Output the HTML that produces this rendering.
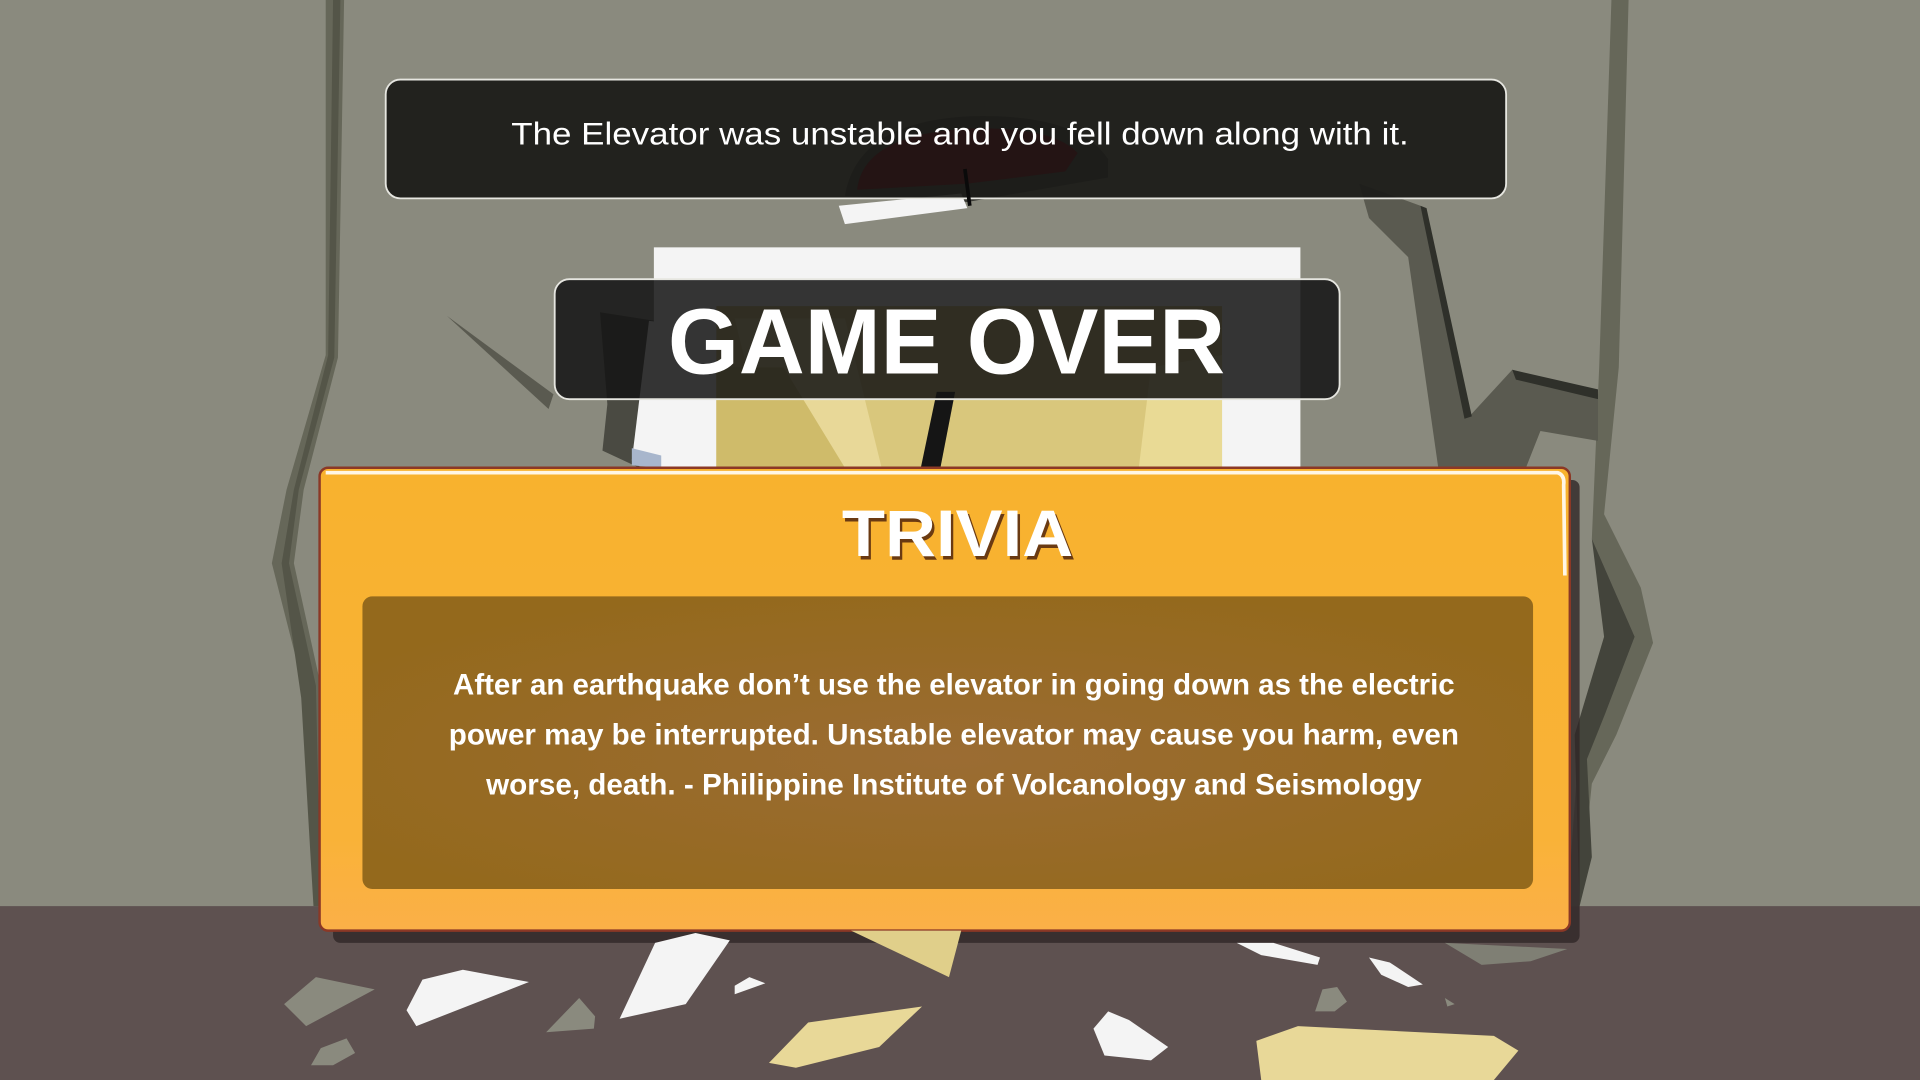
<!DOCTYPE html>
<html><head><meta charset="utf-8"><style>
html,body{margin:0;padding:0;width:1920px;height:1080px;overflow:hidden;background:#8a8a7e}
svg{display:block}
text{font-family:"Liberation Sans",Arial,sans-serif}
</style></head><body>
<svg width="1920" height="1080" viewBox="0 0 1568 882" preserveAspectRatio="none" xmlns="http://www.w3.org/2000/svg">
<defs>
<radialGradient id="ig" cx="50%" cy="55%" r="60%">
<stop offset="0" stop-color="#9b6c33"/><stop offset="1" stop-color="#94691c"/>
</radialGradient>
<linearGradient id="og" x1="0" y1="0" x2="0" y2="1">
<stop offset="0" stop-color="#f8b22e"/><stop offset="0.8" stop-color="#f9b238"/><stop offset="1" stop-color="#fbb048"/>
</linearGradient>
</defs>
<rect width="1568" height="882" fill="#8a8a7e"/>
<rect y="740" width="1568" height="142" fill="#5e5150"/>
<polygon points="266,0 281,0 276,292 248,400 240,460 262,560 270,740 258,740 250,570 222,460 234,400 266,290" fill="#666759"/>
<polygon points="272,0 278,0 273,292 244,400 236,460 258,560 262,740 256,740 246,570 230,460 240,400 268,290" fill="#545548"/>
<polygon points="1316,0 1330,0 1322,300 1310,420 1340,480 1350,525 1320,600 1300,640 1290,740 1280,740 1288,630 1312,580 1335,520 1300,440 1306,300" fill="#666759"/>
<polygon points="1300,440 1335,520 1312,580 1296,620 1300,700 1290,740 1286,600 1310,520" fill="#43443b"/>
<polygon points="1110,150 1160,168 1200,340 1235,302 1305,322 1305,360 1258,352 1245,385 1175,385 1150,210 1118,178" fill="#5a5a50"/>
<polygon points="1160,168 1165,170 1202,340 1196,342" fill="#2f302a"/>
<polygon points="1235,302 1305,318 1305,326 1238,310" fill="#2f302a"/>
<polygon points="365,258 452,322 448,334" fill="#5a5a50"/>
<polygon points="490,255 535,262 522,382 492,368 496,330" fill="#4a4a42"/>
<path d="M690,160 Q700,100 790,95 Q880,92 905,130 L905,145 L790,165 Z" fill="#3a3a34"/>
<polygon points="685,168 785,158 790,170 690,183" fill="#f4f4f4"/>
<rect x="534" y="202" width="528" height="180" fill="#f4f4f4"/>
<polygon points="530,262 585,268 570,382 516,376" fill="#f4f4f4"/>
<polygon points="516,366 540,372 540,382 516,380" fill="#a8b6cc"/>
<rect x="585" y="250" width="413" height="132" fill="#d9c77c"/>
<polygon points="600,260 690,260 720,382 630,382" fill="#e8d898"/>
<polygon points="585,300 640,300 690,382 585,382" fill="#cfbb6a"/>
<polygon points="765,320 780,320 768,382 752,382" fill="#151515"/>
<polygon points="940,300 998,290 998,382 930,382" fill="#e9da95"/>
<rect x="315" y="65" width="915" height="97" rx="12" fill="#1c1c18" fill-opacity="0.94" stroke="#e6e6e0" stroke-width="1.5"/>
<path d="M700,155 Q705,110 790,105 Q860,103 880,125 L870,140 L790,150 Z" fill="#2a0f10" fill-opacity="0.6"/>
<line x1="788" y1="138" x2="792" y2="168" stroke="#0a0a0a" stroke-width="3"/>
<text x="784" y="118" font-size="26" fill="#fff" text-anchor="middle" textLength="733" lengthAdjust="spacingAndGlyphs">The Elevator was unstable and you fell down along with it.</text>
<rect x="453" y="228" width="641" height="98" rx="12" fill="#141414" fill-opacity="0.86" stroke="#e6e6e0" stroke-width="1.5"/>
<text x="773" y="305" font-size="76" font-weight="bold" fill="#fff" text-anchor="middle" textLength="455" lengthAdjust="spacingAndGlyphs">GAME OVER</text>
<rect x="272" y="392" width="1018" height="378" rx="6" fill="#2f2727" fill-opacity="0.8"/>
<rect x="261" y="382" width="1021" height="378" rx="7" fill="url(#og)" stroke="#8b3826" stroke-width="2"/>
<path d="M266,386 L1272,386 Q1278,388 1277,396 L1278,470" fill="none" stroke="#fff6e6" stroke-width="3"/>
<text x="784" y="457" font-size="54" font-weight="bold" fill="#6a3a12" text-anchor="middle" textLength="189" lengthAdjust="spacingAndGlyphs">TRIVIA</text>
<text x="782" y="454" font-size="54" font-weight="bold" fill="#fff" text-anchor="middle" textLength="189" lengthAdjust="spacingAndGlyphs">TRIVIA</text>
<rect x="296" y="487" width="956" height="239" rx="8" fill="url(#ig)"/>
<g font-size="24" font-weight="bold" fill="#fff" text-anchor="middle">
<text x="779" y="567" textLength="818" lengthAdjust="spacingAndGlyphs">After an earthquake don’t use the elevator in going down as the electric</text>
<text x="779" y="608" textLength="825" lengthAdjust="spacingAndGlyphs">power may be interrupted. Unstable elevator may cause you harm, even</text>
<text x="779" y="649" textLength="764" lengthAdjust="spacingAndGlyphs">worse, death.  - Philippine Institute of Volcanology and Seismology</text>
</g>
<polygon points="695,760 785,760 775,798" fill="#e0cf8a"/>
<polygon points="1180,770 1280,775 1250,785 1210,788" fill="#7f7f74"/>
<polygon points="258,798 306,808 250,838 232,820" fill="#8a8a7e"/>
<polygon points="345,800 378,792 432,802 340,838 332,825" fill="#f4f4f4"/>
<polygon points="535,770 568,762 596,768 560,820 506,832" fill="#f4f4f4"/>
<polygon points="600,805 612,798 625,803 600,812" fill="#f4f4f4"/>
<polygon points="473,815 486,830 485,840 446,843" fill="#8a8a7e"/>
<polygon points="660,835 753,822 718,855 650,872 628,868" fill="#e8d898"/>
<polygon points="1010,770 1040,770 1078,782 1076,788 1030,780" fill="#f4f4f4"/>
<polygon points="1118,782 1135,786 1162,804 1150,806 1128,796" fill="#f4f4f4"/>
<polygon points="1080,808 1092,806 1100,818 1090,826 1074,826" fill="#8a8a7e"/>
<polygon points="1180,815 1188,820 1182,822" fill="#8a8a7e"/>
<polygon points="905,826 922,833 954,855 940,866 902,862 893,840" fill="#f4f4f4"/>
<polygon points="1060,838 1220,846 1240,858 1220,882 1030,882 1026,850" fill="#e8d898"/>
<polygon points="262,856 283,848 290,860 272,870 254,870" fill="#8a8a7e"/>
</svg>
</body></html>
